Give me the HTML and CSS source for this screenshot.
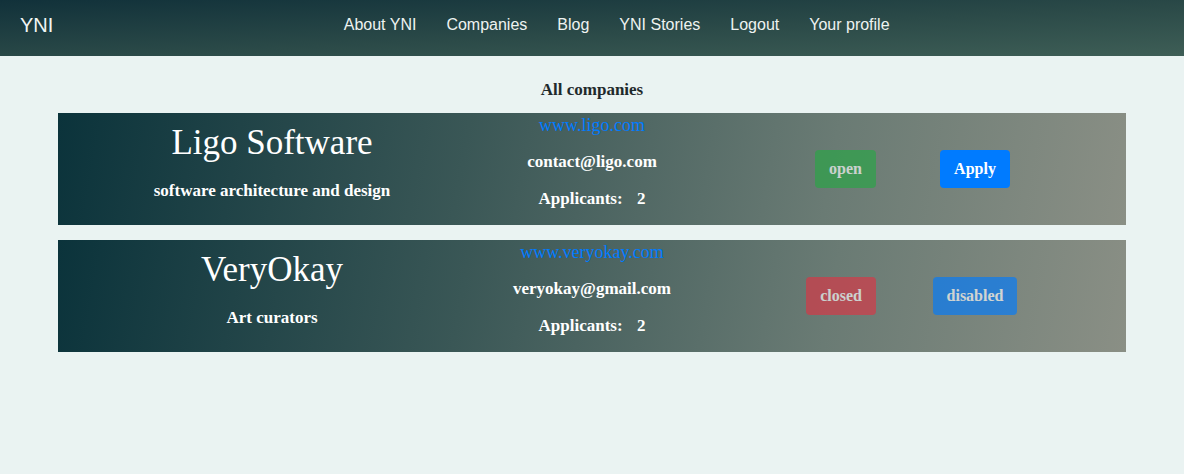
FILE: index.html
```html
<!DOCTYPE html>
<html lang="en">
<head>
<meta charset="utf-8">
<title>YNI - All companies</title>
<link rel="stylesheet" href="styles.css">
</head>
<body>
<nav class="navbar">
  <a class="brand" href="#">YNI</a>
  <ul class="nav-links">
    <li><a href="#">About YNI</a></li>
    <li><a href="#">Companies</a></li>
    <li><a href="#">Blog</a></li>
    <li><a href="#">YNI Stories</a></li>
    <li><a href="#">Logout</a></li>
    <li><a href="#">Your profile</a></li>
  </ul>
</nav>
<main class="page">
  <h2 class="page-title">All companies</h2>
  <div class="card">
    <div class="col-info">
      <h1 class="company-name">Ligo Software</h1>
      <p class="company-desc">software architecture and design</p>
    </div>
    <div class="col-contact">
      <a class="site" href="#">www.ligo.com</a>
      <p class="contact">contact@ligo.com</p>
      <p class="contact">Applicants: <span class="count">2</span></p>
    </div>
    <div class="col-status">
      <button class="btn btn-success is-disabled" disabled>open</button>
    </div>
    <div class="col-action">
      <button class="btn btn-primary">Apply</button>
    </div>
  </div>
  <div class="card">
    <div class="col-info">
      <h1 class="company-name">VeryOkay</h1>
      <p class="company-desc">Art curators</p>
    </div>
    <div class="col-contact">
      <a class="site" href="#">www.veryokay.com</a>
      <p class="contact">veryokay@gmail.com</p>
      <p class="contact">Applicants: <span class="count">2</span></p>
    </div>
    <div class="col-status">
      <button class="btn btn-danger is-disabled" disabled>closed</button>
    </div>
    <div class="col-action">
      <button class="btn btn-primary is-disabled" disabled>disabled</button>
    </div>
  </div>
</main>
</body>
</html>
```

FILE: styles.css
```css
* { box-sizing: border-box; }

html, body {
  margin: 0;
  padding: 0;
}

body {
  background: #eaf3f2;
  font-family: "Liberation Serif", "Times New Roman", serif;
  color: #212529;
  height: 474px;
}

.navbar {
  display: flex;
  align-items: flex-start;
  height: 56px;
  padding: 14px 20px 0;
  background: linear-gradient(to bottom right, #11313a 0%, #2b4a48 55%, #3e5e56 100%);
  font-family: "Liberation Sans", Arial, sans-serif;
}

.brand {
  color: #f2f6f5;
  text-decoration: none;
  font-size: 20px;
  line-height: 22px;
  margin-right: 16px;
}

.nav-links {
  flex: 1;
  display: flex;
  justify-content: center;
  list-style: none;
  margin: 0;
  padding: 0;
}

.nav-links a {
  display: block;
  padding: 0 15px;
  color: #eef3f1;
  text-decoration: none;
  font-size: 16px;
  line-height: 22px;
}

.page {
  padding: 25px 58px 0;
}

.page-title {
  margin: 0 0 14px;
  text-align: center;
  font-size: 17px;
  font-weight: bold;
  line-height: 18px;
  color: #1f2a2c;
}

.card {
  display: grid;
  grid-template-columns: 428px 212px 180px 1fr;
  height: 112px;
  margin-bottom: 15px;
  background: linear-gradient(100deg, #0b333b 0%, #3a5756 38%, #6a7b74 72%, #8a8f85 100%);
  color: #fff;
}

.col-info {
  display: flex;
  flex-direction: column;
  align-items: center;
  padding-top: 10px;
}

.company-name {
  margin: 0;
  font-size: 35px;
  font-weight: normal;
  line-height: 40px;
}

.company-desc {
  margin: 17px 0 0;
  font-size: 17px;
  font-weight: bold;
  line-height: 22px;
}

.col-contact {
  display: flex;
  flex-direction: column;
  align-items: center;
}

.site {
  color: #007bff;
  text-decoration: none;
  font-size: 18px;
  line-height: 24px;
}

.contact {
  margin: 13px 0 0;
  font-size: 17px;
  font-weight: bold;
  line-height: 24px;
}

.count {
  margin-left: 10px;
}

.col-status {
  display: flex;
  align-items: center;
  justify-content: flex-end;
  padding-right: 2px;
}

.col-action {
  display: flex;
  align-items: center;
  justify-content: center;
  padding-right: 54px;
}

.btn {
  font-family: "Liberation Serif", "Times New Roman", serif;
  font-size: 16px;
  font-weight: bold;
  line-height: 24px;
  padding: 6px 13px;
  border: 1px solid transparent;
  border-radius: 4px;
  color: #fff;
  cursor: pointer;
}

.btn-success { background: #28a745; }
.btn-danger { background: #dc3545; }
.btn-primary { background: #007bff; }

.is-disabled {
  opacity: 0.65;
  cursor: default;
}
```
